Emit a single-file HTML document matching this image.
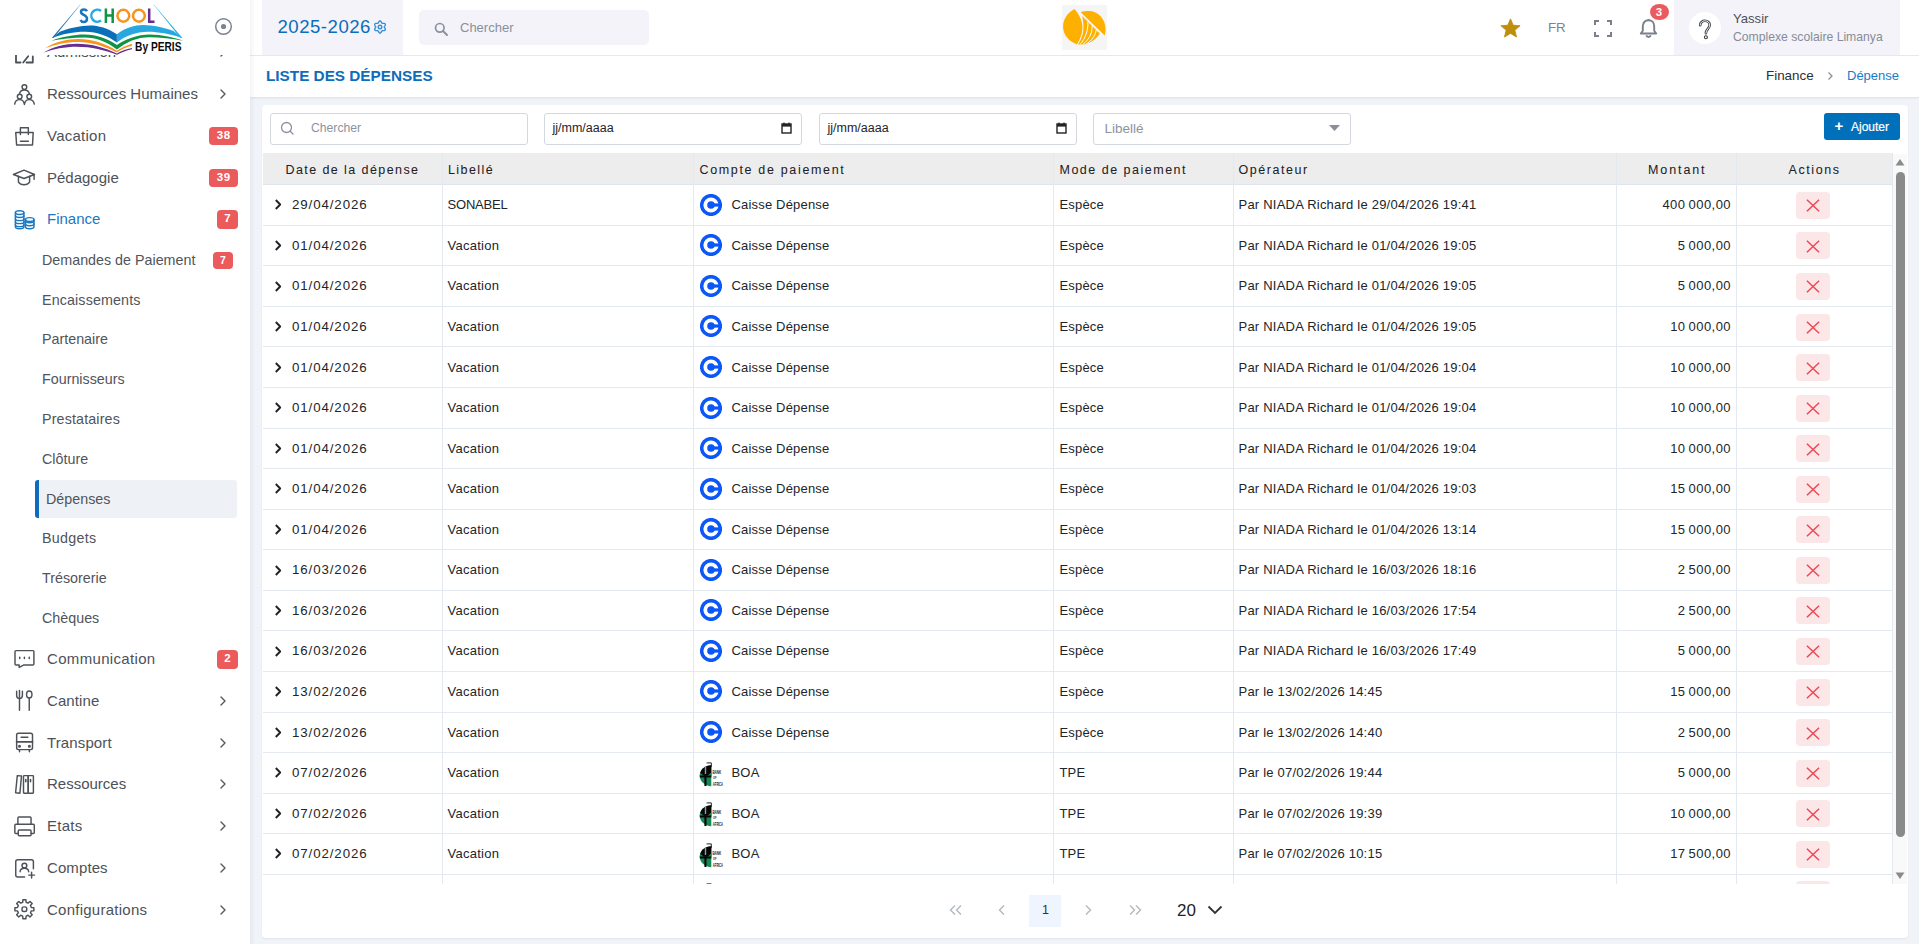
<!DOCTYPE html>
<html><head><meta charset="utf-8">
<style>
*{box-sizing:border-box;margin:0;padding:0}
html,body{width:1919px;height:944px;overflow:hidden}
body{font-family:"Liberation Sans",sans-serif;background:#f0f4f8;position:relative;color:#212529}
.abs{position:absolute}
#sidebar{position:absolute;left:0;top:0;width:250px;height:944px;background:#fff;z-index:5;overflow:hidden}
#sbshadow{position:absolute;left:250px;top:0;width:5px;height:944px;z-index:4;background:linear-gradient(to right,rgba(30,40,80,.05),rgba(30,40,80,0))}
.mi{position:absolute;left:0;width:250px;height:40px;color:#4d5158;font-size:15px;line-height:40px;white-space:nowrap}
.mi svg.ic{position:absolute;left:13px;top:9px}
.mi .tx{position:absolute;left:47px;top:0}
.sub{position:absolute;left:0;width:250px;height:38px;color:#50545b;font-size:14.3px;line-height:38px;white-space:nowrap}
.sub .tx{position:absolute;left:42px;top:0}
.badge{position:absolute;background:#eb5b5b;color:#fff;font-weight:bold;font-size:11.5px;text-align:center;border-radius:4px}
#topbar{position:absolute;left:250px;top:0;width:1669px;height:56px;background:#fff;border-bottom:1px solid #e6e8eb;z-index:2}
#titlebar{position:absolute;left:250px;top:56px;width:1669px;height:41px;background:#fff;box-shadow:0 1px 2px rgba(20,30,50,.09);z-index:1}
#card{position:absolute;left:262px;top:105px;width:1646px;height:833px;background:#fff;border-radius:4px;box-shadow:0 1px 2px rgba(20,30,50,.07)}
.inp{position:absolute;top:113px;height:31.5px;border:1px solid #d3d7de;border-radius:3px;background:#fff;font-size:12px;white-space:nowrap}
#tbl{position:absolute;left:263px;top:153px;width:1630px;height:731px;overflow:hidden}
.th{position:absolute;top:0;height:32px;background:#ededed;border-bottom:1px solid #dfe5ee;font-size:12.5px;letter-spacing:1.42px;line-height:31px;color:#1d2126;-webkit-text-stroke:0.05px #1d2126;white-space:nowrap}
.vl{position:absolute;top:0;width:1px;background:#e3e8f1}
.hl{position:absolute;left:0;width:1630px;height:1px;background:#e3e8f1}
.cell{position:absolute;font-size:13px;letter-spacing:0.18px;color:#212529;white-space:nowrap;line-height:16px}
.del{position:absolute;left:1533px;width:34px;height:27px;background:#fce7e8;border-radius:4px}
</style></head><body>

<div id="sidebar">
<div class="mi" style="top:32px;color:#4d5158">
<svg class="abs" style="left:0;top:0" width="50" height="40" viewBox="0 0 50 40"><g fill="none" stroke="#4d5158" stroke-width="1.45" stroke-linecap="round" stroke-linejoin="round"><g stroke-width="1.8"><path d="M16 21V30.5H20.5"/><path d="M23.2 30.5L28.2 24.2"/><path d="M26.5 30.5H32.8V24.5"/></g></g></svg>
<span class="tx" style="letter-spacing:0px">Admission</span>
<svg class="abs" style="left:219px;top:15px" width="8" height="10" viewBox="0 0 8 10"><path d="M2 1L6 5L2 9" fill="none" stroke="#55595f" stroke-width="1.4" stroke-linecap="round" stroke-linejoin="round"/></svg>
</div>
<div class="mi" style="top:74px;color:#4d5158">
<svg class="abs" style="left:0;top:0" width="50" height="40" viewBox="0 0 50 40"><g fill="none" stroke="#4d5158" stroke-width="1.45" stroke-linecap="round" stroke-linejoin="round"><circle cx="24.4" cy="13" r="2.35"/><path d="M19.5 19.7C20 17.2 22 15.9 24.4 15.9C26.8 15.9 28.8 17.2 29.4 19.7"/><circle cx="19.7" cy="22.6" r="2.35"/><circle cx="29.25" cy="22.6" r="2.35"/><path d="M14.7 30.1C15 27.5 17 25.6 19.7 25.6C22 25.6 24 27.5 24.4 30.5C24.8 27.5 26.8 25.6 29.25 25.6C31.9 25.6 33.9 27.5 34.3 30.1"/></g></svg>
<span class="tx" style="letter-spacing:0px">Ressources Humaines</span>
<svg class="abs" style="left:219px;top:15px" width="8" height="10" viewBox="0 0 8 10"><path d="M2 1L6 5L2 9" fill="none" stroke="#55595f" stroke-width="1.4" stroke-linecap="round" stroke-linejoin="round"/></svg>
</div>
<div class="mi" style="top:116px;color:#4d5158">
<svg class="abs" style="left:0;top:0" width="50" height="40" viewBox="0 0 50 40"><g fill="none" stroke="#4d5158" stroke-width="1.45" stroke-linecap="round" stroke-linejoin="round"><path d="M15.75 16.4H33.2L32.5 29H16.6Z"/><path d="M20.4 18.4V11.7H28.35V18.4"/><path d="M20.4 25.25H28.35"/></g></svg>
<span class="tx" style="letter-spacing:0.25px">Vacation</span>
</div>
<div class="badge" style="left:209px;top:126.7px;width:29px;height:18px;line-height:17px;letter-spacing:0.6px;text-indent:0.6px">38</div>
<div class="mi" style="top:158px;color:#4d5158">
<svg class="abs" style="left:0;top:0" width="50" height="40" viewBox="0 0 50 40"><g fill="none" stroke="#4d5158" stroke-width="1.45" stroke-linecap="round" stroke-linejoin="round"><path d="M13.4 16.5L24 12.2L34.5 16.5L24 20.5Z"/><path d="M18.45 18.3V24.1C19.5 25.8 21.5 26.8 24 26.8C26.5 26.8 28.5 25.8 29.6 24.1V18.3"/><path d="M34.1 16.5V21.2"/></g></svg>
<span class="tx" style="letter-spacing:0px">Pédagogie</span>
</div>
<div class="badge" style="left:209px;top:168.7px;width:29px;height:18px;line-height:17px;letter-spacing:0.6px;text-indent:0.6px">39</div>
<div class="mi" style="top:199px;color:#1b78c2">
<svg class="abs" style="left:0;top:0" width="50" height="40" viewBox="0 0 50 40"><g fill="none" stroke="#1b78c2" stroke-width="1.45" stroke-linecap="round" stroke-linejoin="round"><ellipse cx="19.65" cy="13.6" rx="4.25" ry="1.9"/><path d="M15.4 13.6V27.8C15.4 28.9 17.3 29.7 19.65 29.7C22 29.7 23.9 28.9 23.9 27.8V13.6"/><path d="M15.399999999999999 16.6C15.399999999999999 17.700000000000003 17.299999999999997 18.5 19.65 18.5C22.0 18.5 23.9 17.700000000000003 23.9 16.6"/><path d="M15.399999999999999 19.7C15.399999999999999 20.8 17.299999999999997 21.599999999999998 19.65 21.599999999999998C22.0 21.599999999999998 23.9 20.8 23.9 19.7"/><path d="M15.399999999999999 22.7C15.399999999999999 23.8 17.299999999999997 24.599999999999998 19.65 24.599999999999998C22.0 24.599999999999998 23.9 23.8 23.9 22.7"/><path d="M15.399999999999999 25.7C15.399999999999999 26.8 17.299999999999997 27.599999999999998 19.65 27.599999999999998C22.0 27.599999999999998 23.9 26.8 23.9 25.7"/><ellipse cx="29.7" cy="20.5" rx="4.25" ry="1.9"/><path d="M25.45 20.5V27.8C25.45 28.9 27.35 29.7 29.7 29.7C32.05 29.7 33.95 28.9 33.95 27.8V20.5"/><path d="M25.45 21.8C25.45 22.900000000000002 27.349999999999998 23.7 29.7 23.7C32.05 23.7 33.95 22.900000000000002 33.95 21.8"/><path d="M25.45 24.8C25.45 25.900000000000002 27.349999999999998 26.7 29.7 26.7C32.05 26.7 33.95 25.900000000000002 33.95 24.8"/></g></svg>
<span class="tx" style="letter-spacing:0px">Finance</span>
</div>
<div class="badge" style="left:217px;top:210px;width:21px;height:18.5px;line-height:17.5px">7</div>
<div class="mi" style="top:639px;color:#4d5158">
<svg class="abs" style="left:0;top:0" width="50" height="40" viewBox="0 0 50 40"><g fill="none" stroke="#4d5158" stroke-width="1.45" stroke-linecap="round" stroke-linejoin="round"><path d="M15 12.6Q15 11.6 16 11.6H32.9Q33.9 11.6 33.9 12.6V25.05Q33.9 26.05 32.9 26.05H23.5L19.2 28.4V26.05H16Q15 26.05 15 25.05Z"/><path d="M19.7 18.2V19.5M24.4 18.2V19.5M29.25 18.2V19.5" stroke-width="1.5"/></g></svg>
<span class="tx" style="letter-spacing:0.33px">Communication</span>
</div>
<div class="badge" style="left:217px;top:650px;width:21px;height:18.5px;line-height:17.5px">2</div>
<div class="mi" style="top:681px;color:#4d5158">
<svg class="abs" style="left:0;top:0" width="50" height="40" viewBox="0 0 50 40"><g fill="none" stroke="#4d5158" stroke-width="1.45" stroke-linecap="round" stroke-linejoin="round"><path d="M16.65 10.2V14.5C16.65 16.3 17.9 17.4 19.5 17.4C21.1 17.4 22.4 16.3 22.4 14.5V10.2"/><path d="M19.5 9.5V29.3"/><ellipse cx="29.25" cy="13.45" rx="2.7" ry="3.5"/><path d="M29.25 17V29.3"/></g></svg>
<span class="tx" style="letter-spacing:0.1px">Cantine</span>
<svg class="abs" style="left:219px;top:15px" width="8" height="10" viewBox="0 0 8 10"><path d="M2 1L6 5L2 9" fill="none" stroke="#55595f" stroke-width="1.4" stroke-linecap="round" stroke-linejoin="round"/></svg>
</div>
<div class="mi" style="top:723px;color:#4d5158">
<svg class="abs" style="left:0;top:0" width="50" height="40" viewBox="0 0 50 40"><g fill="none" stroke="#4d5158" stroke-width="1.45" stroke-linecap="round" stroke-linejoin="round"><rect x="16.65" y="10.2" width="15.85" height="16.4" rx="1.8"/><path d="M21.15 14.2H27.8" stroke-width="1.6"/><path d="M16.65 18.85H32.5" stroke-width="1.8"/><circle cx="19.5" cy="23.3" r=".8"/><circle cx="29.4" cy="23.3" r=".8"/><path d="M19.5 26.6V28.75M29.4 26.6V28.75"/></g></svg>
<span class="tx" style="letter-spacing:0.12px">Transport</span>
<svg class="abs" style="left:219px;top:15px" width="8" height="10" viewBox="0 0 8 10"><path d="M2 1L6 5L2 9" fill="none" stroke="#55595f" stroke-width="1.4" stroke-linecap="round" stroke-linejoin="round"/></svg>
</div>
<div class="mi" style="top:764px;color:#4d5158">
<svg class="abs" style="left:0;top:0" width="50" height="40" viewBox="0 0 50 40"><g fill="none" stroke="#4d5158" stroke-width="1.45" stroke-linecap="round" stroke-linejoin="round"><path d="M17.3 11.6L21.5 11.9L19.9 29.2L15.6 28.8Z"/><rect x="23.5" y="11.6" width="4.7" height="17.6" rx=".6"/><rect x="28.2" y="11.6" width="5.2" height="17.6" rx=".6"/><path d="M25.8 15.6V17.8M30.5 15.6V17.8" stroke-width="1.6"/></g></svg>
<span class="tx" style="letter-spacing:0px">Ressources</span>
<svg class="abs" style="left:219px;top:15px" width="8" height="10" viewBox="0 0 8 10"><path d="M2 1L6 5L2 9" fill="none" stroke="#55595f" stroke-width="1.4" stroke-linecap="round" stroke-linejoin="round"/></svg>
</div>
<div class="mi" style="top:806px;color:#4d5158">
<svg class="abs" style="left:0;top:0" width="50" height="40" viewBox="0 0 50 40"><g fill="none" stroke="#4d5158" stroke-width="1.45" stroke-linecap="round" stroke-linejoin="round"><path d="M17.9 18.3V11.9Q17.9 10.9 18.9 10.9H30.05Q31.05 10.9 31.05 11.9V18.3"/><path d="M18.25 27.5H15.85Q14.85 27.5 14.85 26.5V19.3Q14.85 18.3 15.85 18.3H33.3Q34.3 18.3 34.3 19.3V26.5Q34.3 27.5 33.3 27.5H31.05"/><rect x="18.25" y="23.9" width="12.8" height="5.9" rx="1"/></g></svg>
<span class="tx" style="letter-spacing:0.25px">Etats</span>
<svg class="abs" style="left:219px;top:15px" width="8" height="10" viewBox="0 0 8 10"><path d="M2 1L6 5L2 9" fill="none" stroke="#55595f" stroke-width="1.4" stroke-linecap="round" stroke-linejoin="round"/></svg>
</div>
<div class="mi" style="top:848px;color:#4d5158">
<svg class="abs" style="left:0;top:0" width="50" height="40" viewBox="0 0 50 40"><g fill="none" stroke="#4d5158" stroke-width="1.45" stroke-linecap="round" stroke-linejoin="round"><path d="M33.4 20.65V13.65Q33.4 11.65 31.4 11.65H17.75Q15.75 11.65 15.75 13.65V26.9Q15.75 28.9 17.75 28.9H24.6"/><circle cx="24.4" cy="17.6" r="2.4"/><path d="M20.05 23.7C20.3 21.5 22 20.3 24.4 20.3C26.8 20.3 28.5 21.5 28.7 23.7"/><path d="M31.6 24.2V30M28.7 27.1H34.5"/></g></svg>
<span class="tx" style="letter-spacing:0.1px">Comptes</span>
<svg class="abs" style="left:219px;top:15px" width="8" height="10" viewBox="0 0 8 10"><path d="M2 1L6 5L2 9" fill="none" stroke="#55595f" stroke-width="1.4" stroke-linecap="round" stroke-linejoin="round"/></svg>
</div>
<div class="mi" style="top:890px;color:#4d5158">
<svg class="abs" style="left:0;top:0" width="50" height="40" viewBox="0 0 50 40"><g fill="none" stroke="#4d5158" stroke-width="1.45" stroke-linecap="round" stroke-linejoin="round"><path d="M22.71 12.30 L22.87 9.72 L25.93 9.72 L26.09 12.30 L28.08 13.13 L30.02 11.42 L32.18 13.58 L30.47 15.52 L31.30 17.51 L33.88 17.67 L33.88 20.73 L31.30 20.89 L30.47 22.88 L32.18 24.82 L30.02 26.98 L28.08 25.27 L26.09 26.10 L25.93 28.68 L22.87 28.68 L22.71 26.10 L20.72 25.27 L18.78 26.98 L16.62 24.82 L18.33 22.88 L17.50 20.89 L14.92 20.73 L14.92 17.67 L17.50 17.51 L18.33 15.52 L16.62 13.58 L18.78 11.42 L20.72 13.13Z"/><rect x="22.05" y="16.85" width="4.7" height="4.7" rx="1.8"/></g></svg>
<span class="tx" style="letter-spacing:0.25px">Configurations</span>
<svg class="abs" style="left:219px;top:15px" width="8" height="10" viewBox="0 0 8 10"><path d="M2 1L6 5L2 9" fill="none" stroke="#55595f" stroke-width="1.4" stroke-linecap="round" stroke-linejoin="round"/></svg>
</div>
<div class="sub" style="top:241px"><span class="tx" style="letter-spacing:0px">Demandes de Paiement</span></div>
<div class="badge" style="left:213px;top:251.5px;width:20px;height:17px;line-height:17px;font-size:10.5px">7</div>
<div class="sub" style="top:281px"><span class="tx" style="letter-spacing:0.12px">Encaissements</span></div>
<div class="sub" style="top:320px"><span class="tx" style="letter-spacing:0px">Partenaire</span></div>
<div class="sub" style="top:360px"><span class="tx" style="letter-spacing:0px">Fournisseurs</span></div>
<div class="sub" style="top:400px"><span class="tx" style="letter-spacing:0.14px">Prestataires</span></div>
<div class="sub" style="top:440px"><span class="tx" style="letter-spacing:0px">Clôture</span></div>
<div class="abs" style="left:35px;top:480px;width:202px;height:38px;background:#eef1f6;border-radius:3px;border-left:4px solid #0f6cbd"></div>
<div class="sub" style="top:480px"><span class="tx" style="left:46px">Dépenses</span></div>
<div class="sub" style="top:519px"><span class="tx" style="letter-spacing:0.28px">Budgets</span></div>
<div class="sub" style="top:559px"><span class="tx" style="letter-spacing:0px">Trésorerie</span></div>
<div class="sub" style="top:599px"><span class="tx" style="letter-spacing:0px">Chèques</span></div>
<div class="abs" style="left:0;top:0;width:250px;height:55px;background:#fff"></div>
<svg class="abs" style="left:0;top:0" width="250" height="60" viewBox="0 0 250 60">
<path d="M80.3 4.4L51.75 38.1L54 37.6L80.6 4.6Z" fill="#1b75bb"/>
<path d="M153.8 4.4L182.4 38.1L180 37.5L153.5 4.6Z" fill="#29abe2"/>
<path d="M51.75 38.1C62 34 75 31.6 85.7 31.8C97 32 108 36 116.9 42.6L116.9 34.3C108 28 98 25.4 90.2 25.4C80 25.4 68 28.5 60.3 31.4Z" fill="#0a6fb9"/>
<path d="M182.4 38.1C170 34 158 31.8 148.1 31.8C136 31.8 125 36 116.9 42.6L116.9 34.3C125 28 135 25.1 143 25.1C153 25.1 165 28 173.5 31.1Z" fill="#29a8e0"/>
<path d="M51.4 40.7C62 37 74 34.6 84.5 34.6C97 34.6 108 39 116.9 45.1C126 39 138 34.6 149.4 34.6C162 34.6 175 38 183 40.7C172 38.5 160 37.2 149.4 37.2C137 37.2 126 42 116.9 49.6C108 42 96 37.5 84.5 37.5C73 37.5 61 39 51.4 40.7Z" fill="#0d9444"/>
<path d="M45.1 48.3C55 42 67 39.1 78.1 39.1C92 39.1 105 43.5 116.9 50.8C121 48 126 45.5 131.9 43.8L131.9 45.7C126 47 121 49.5 116.9 52.5C105 46 91 41.9 78.1 41.9C66 41.9 55 44.5 45.1 48.3Z" fill="#f7941d"/>
<path d="M43.2 52.7C53 47 65 43.8 76.8 43.8C92 43.8 105 48 116.9 53.4C121 51 126 49 131.9 48L131.9 49.2C126 50.5 121 52.5 116.9 54.8C105 50 91 46.7 76.8 46.7C65 46.7 53 49 43.2 52.7Z" fill="#662d91"/>
<g fill="none" stroke-width="2.5">
<path d="M87 11.2C86.2 9.9 85.1 9.5 83.9 9.5C82.1 9.5 81 10.7 81 12C81 15.3 87 14.6 87 18.6C87 20.8 85.5 22.1 83.7 22.1C82.2 22.1 81.1 21.3 80.5 20" stroke="#1b75bb"/>
<path d="M101 10.9A6.05 6.05 0 1 0 101 20.6" stroke="#29abe2"/>
<path d="M105.9 8.6V22.9M112.7 8.6V22.9M105.9 15.6H112.7" stroke="#0d9444"/>
<circle cx="123.35" cy="15.75" r="5.9" stroke="#f7941d"/>
<circle cx="138.9" cy="15.75" r="5.9" stroke="#f7941d"/>
<path d="M149.2 8.6V21.8H154.5" stroke="#662d91"/>
</g>
<text x="135.1" y="51.1" font-family="Liberation Sans" font-size="12.6" font-weight="bold" fill="#0a0a0a" textLength="46.4" lengthAdjust="spacingAndGlyphs">By PERIS</text>
</svg>
<svg class="abs" style="left:214px;top:17px" width="19" height="19" viewBox="0 0 19 19"><circle cx="9.5" cy="9.5" r="7.8" fill="none" stroke="#7d8391" stroke-width="1.5"/><circle cx="9.5" cy="9.5" r="2.6" fill="#7d8391"/></svg>
</div>
<div id="sbshadow"></div>
<div id="topbar">
<div class="abs" style="left:12px;top:0;width:141px;height:55px;background:#f3f3f9"></div>
<div class="abs" style="left:27.5px;top:16px;font-size:18.6px;letter-spacing:0.5px;line-height:22px;color:#0c6dba;white-space:nowrap">2025-2026</div>
<svg class="abs" style="left:123px;top:20px" width="14" height="14" viewBox="0 0 14 14"><g fill="none" stroke="#3a8fd4" stroke-width="1.4"><path d="M11.30 7.00 L11.34 7.23 L11.44 7.47 L11.59 7.73 L11.78 8.02 L11.97 8.33 L12.15 8.67 L12.27 9.02 L12.33 9.37 L12.31 9.71 L12.20 10.00 L12.00 10.25 L11.72 10.43 L11.39 10.56 L11.02 10.62 L10.64 10.64 L10.27 10.63 L9.93 10.61 L9.62 10.61 L9.36 10.64 L9.15 10.72 L8.97 10.87 L8.81 11.08 L8.67 11.34 L8.51 11.65 L8.33 11.97 L8.13 12.29 L7.88 12.58 L7.61 12.81 L7.31 12.95 L7.00 13.00 L6.69 12.95 L6.39 12.81 L6.12 12.58 L5.87 12.29 L5.67 11.97 L5.49 11.65 L5.33 11.34 L5.19 11.08 L5.03 10.87 L4.85 10.72 L4.64 10.64 L4.38 10.61 L4.07 10.61 L3.73 10.63 L3.36 10.64 L2.98 10.62 L2.61 10.56 L2.28 10.43 L2.00 10.25 L1.80 10.00 L1.69 9.71 L1.67 9.37 L1.73 9.02 L1.85 8.67 L2.03 8.33 L2.22 8.02 L2.41 7.73 L2.56 7.47 L2.66 7.23 L2.70 7.00 L2.66 6.77 L2.56 6.53 L2.41 6.27 L2.22 5.98 L2.03 5.67 L1.85 5.33 L1.73 4.98 L1.67 4.63 L1.69 4.29 L1.80 4.00 L2.00 3.75 L2.28 3.57 L2.61 3.44 L2.98 3.38 L3.36 3.36 L3.73 3.37 L4.07 3.39 L4.38 3.39 L4.64 3.36 L4.85 3.28 L5.03 3.13 L5.19 2.92 L5.33 2.66 L5.49 2.35 L5.67 2.03 L5.87 1.71 L6.12 1.42 L6.39 1.19 L6.69 1.05 L7.00 1.00 L7.31 1.05 L7.61 1.19 L7.88 1.42 L8.13 1.71 L8.33 2.03 L8.51 2.35 L8.67 2.66 L8.81 2.92 L8.97 3.13 L9.15 3.28 L9.36 3.36 L9.62 3.39 L9.93 3.39 L10.27 3.37 L10.64 3.36 L11.02 3.38 L11.39 3.44 L11.72 3.57 L12.00 3.75 L12.20 4.00 L12.31 4.29 L12.33 4.63 L12.27 4.98 L12.15 5.33 L11.97 5.67 L11.78 5.98 L11.59 6.27 L11.44 6.53 L11.34 6.77Z"/><circle cx="7" cy="7" r="1.8"/></g></svg>
<div class="abs" style="left:169px;top:10px;width:230px;height:35px;background:#f3f3f9;border-radius:5px"></div>
<svg class="abs" style="left:184px;top:22px" width="14" height="14" viewBox="0 0 14 14"><circle cx="5.8" cy="5.8" r="4.3" fill="none" stroke="#8b909c" stroke-width="1.7"/><path d="M9 9L13 13" stroke="#8b909c" stroke-width="1.9" stroke-linecap="round"/></svg>
<div class="abs" style="left:210px;top:20px;font-size:13px;line-height:15px;color:#8a8f9b">Chercher</div>
<div class="abs" style="left:812px;top:5px;width:45px;height:45px;background:#f5f5f5">
<svg width="45" height="45" viewBox="0 0 45 45">
<path d="M12.4 4.1C5 8.5 1.1 14.5 1.1 21.8C1.1 30 7 36.5 14.9 39.4C19 33 20.6 27 20.4 21.8C20.2 16 17.5 9.5 12.4 4.1Z" fill="#fdb000"/>
<path d="M18.7 7.2C21 6.4 24 6.1 26.7 6.1C36 6.1 43.5 14 43.5 24.5C43.5 26.5 43.2 28.6 42.7 30.6Z" fill="#fdb000"/>
<path d="M20.1 11L37.7 28.6C35 33.5 30 37.5 23 39.2C20.5 39.6 18 39.6 16 39.4C19.8 34 21.6 27.5 21.5 21.8C21.4 17.5 20.9 14 20.1 11Z" fill="#fdb000"/>
<g fill="none" stroke="#fff" stroke-width="1"><path d="M25.9 16.8C26.3 25 23.5 33.5 18 39.6"/><path d="M30.1 21C30.3 28.5 27 34.5 20.8 39.6"/><path d="M34.2 25.1C33.3 30.5 30 35.5 23.8 39.4"/></g>
</svg></div>
<svg class="abs" style="left:1250px;top:18px" width="21" height="20" viewBox="0 0 24 23"><path d="M12 1L15.1 8.3L23 8.9L17 14.1L18.9 21.9L12 17.7L5.1 21.9L7 14.1L1 8.9L8.9 8.3Z" fill="#bd8f0c" stroke="#bd8f0c" stroke-width="1" stroke-linejoin="round"/></svg>
<div class="abs" style="left:1298px;top:20px;font-size:13.3px;line-height:15px;color:#7d8290">FR</div>
<svg class="abs" style="left:1344px;top:20px" width="18" height="17" viewBox="0 0 18 17"><g fill="none" stroke="#7a7f8c" stroke-width="2"><path d="M1 5V1H5"/><path d="M13 1H17V5"/><path d="M17 12V16H13"/><path d="M5 16H1V12"/></g></svg>
<svg class="abs" style="left:1389px;top:18px" width="19" height="20" viewBox="0 0 19 20"><g fill="none" stroke="#7a7f8c" stroke-width="1.9" stroke-linejoin="round"><path d="M9.5 2.2C6 2.2 3.8 5 3.8 8.2V12.8L1.8 15.5H17.2L15.2 12.8V8.2C15.2 5 13 2.2 9.5 2.2Z"/><path d="M7.3 17.3C7.6 18.5 8.4 19 9.5 19C10.6 19 11.4 18.5 11.7 17.3"/><path d="M9.5 1V2.2"/></g></svg>
<div class="abs" style="left:1399.5px;top:3.5px;width:19px;height:16.5px;border-radius:50%;background:#ea5a5e;color:#fff;font-weight:bold;font-size:11.5px;line-height:16.5px;text-align:center">3</div>
<div class="abs" style="left:1424px;top:0;width:226px;height:55px;background:#f3f3f9"></div>
<div class="abs" style="left:1439px;top:12px;width:32px;height:32px;border-radius:16px;background:#fff"></div>
<svg class="abs" style="left:1447px;top:18.5px" width="16" height="22" viewBox="0 0 16 22"><g fill="none" stroke="#3a3e44" stroke-linecap="round" stroke-linejoin="round"><path d="M3.2 6.2C3.2 3.4 5.3 1.8 7.9 1.8C10.6 1.8 12.7 3.6 12.7 6.1C12.7 9.6 8.9 10.2 8.9 14.2" stroke-width="2.6"/><path d="M3.2 6.2C3.2 3.4 5.3 1.8 7.9 1.8C10.6 1.8 12.7 3.6 12.7 6.1C12.7 9.6 8.9 10.2 8.9 14.2" stroke="#fff" stroke-width="0.9"/><circle cx="8.9" cy="18.2" r="1.5" stroke-width="1.1"/></g></svg>
<div class="abs" style="left:1483px;top:11px;font-size:13.1px;line-height:15px;color:#4d5158">Yassir</div>
<div class="abs" style="left:1483px;top:30px;font-size:12.2px;line-height:15px;color:#878b96">Complexe scolaire Limanya</div>
</div>
<div id="titlebar">
<div class="abs" style="left:16px;top:11px;font-size:15.3px;line-height:18px;font-weight:bold;color:#0c6dba;white-space:nowrap">LISTE DES DÉPENSES</div>
<div class="abs" style="left:1516px;top:12px;font-size:13.4px;line-height:15px;color:#2b2f36">Finance</div>
<svg class="abs" style="left:1577px;top:15px" width="7" height="10" viewBox="0 0 7 10"><path d="M1.5 1.5L5 5L1.5 8.5" fill="none" stroke="#8a8e99" stroke-width="1.3"/></svg>
<div class="abs" style="left:1597px;top:12px;font-size:13px;line-height:15px;color:#1a7bc4">Dépense</div>
</div>
<div id="card"></div>
<div class="inp" style="left:270px;width:257.5px"></div>
<svg class="abs" style="left:280px;top:121px" width="15" height="15" viewBox="0 0 15 15"><circle cx="6.5" cy="6.5" r="5" fill="none" stroke="#8c93a0" stroke-width="1.3"/><path d="M10.2 10.2L13 13" stroke="#8c93a0" stroke-width="1.3" stroke-linecap="round"/></svg>
<div class="abs" style="left:311px;top:121px;font-size:12.2px;line-height:14px;color:#8c93a0">Chercher</div>
<div class="inp" style="left:544px;width:258px"></div>
<div class="abs" style="left:552.5px;top:121px;font-size:12.5px;line-height:14px;color:#1f2328">jj/mm/aaaa</div>
<svg class="abs" style="left:781px;top:122px" width="11" height="12" viewBox="0 0 11 12"><g fill="none" stroke="#222" stroke-width="1.4"><rect x="1" y="2" width="9" height="9"/></g><rect x="1" y="2" width="9" height="2.6" fill="#222"/><path d="M3 0.5V2M8 0.5V2" stroke="#222" stroke-width="1.2"/></svg>
<div class="inp" style="left:819px;width:258px"></div>
<div class="abs" style="left:827.5px;top:121px;font-size:12.5px;line-height:14px;color:#1f2328">jj/mm/aaaa</div>
<svg class="abs" style="left:1056px;top:122px" width="11" height="12" viewBox="0 0 11 12"><g fill="none" stroke="#222" stroke-width="1.4"><rect x="1" y="2" width="9" height="9"/></g><rect x="1" y="2" width="9" height="2.6" fill="#222"/><path d="M3 0.5V2M8 0.5V2" stroke="#222" stroke-width="1.2"/></svg>
<div class="inp" style="left:1093px;width:258px"></div>
<div class="abs" style="left:1104.5px;top:122px;font-size:13.5px;line-height:14px;color:#8c93a0">Libellé</div>
<svg class="abs" style="left:1329px;top:125px" width="11" height="6" viewBox="0 0 11 6"><path d="M0 0H11L5.5 6Z" fill="#8a8f99"/></svg>
<div class="abs" style="left:1824px;top:113px;width:76px;height:27px;background:#0070bb;border-radius:3px"></div>
<div class="abs" style="left:1834.5px;top:118px;font-size:15px;line-height:16px;color:#fff;font-weight:bold">+</div>
<div class="abs" style="left:1851px;top:120px;font-size:12px;line-height:14px;color:#fff;-webkit-text-stroke:0.2px #fff">Ajouter</div>
<div id="tbl">
<div class="th" style="left:0;width:1630px"></div>
<div class="th" style="left:22.5px;top:1.5px;background:none;border:none;letter-spacing:1.42px">Date de la dépense</div>
<div class="th" style="left:185px;top:1.5px;background:none;border:none;letter-spacing:1.42px">Libellé</div>
<div class="th" style="left:436.5px;top:1.5px;background:none;border:none;letter-spacing:1.66px">Compte de paiement</div>
<div class="th" style="left:796.5px;top:1.5px;background:none;border:none;letter-spacing:1.5px">Mode de paiement</div>
<div class="th" style="left:975.5px;top:1.5px;background:none;border:none;letter-spacing:1.55px">Opérateur</div>
<div class="th" style="left:1385px;top:1.5px;background:none;border:none;letter-spacing:1.9px">Montant</div>
<div class="th" style="left:1525.5px;top:1.5px;background:none;border:none;letter-spacing:1.6px">Actions</div>
<div class="hl" style="top:71.80px"></div>
<div class="hl" style="top:112.36px"></div>
<div class="hl" style="top:152.92px"></div>
<div class="hl" style="top:193.48px"></div>
<div class="hl" style="top:234.04px"></div>
<div class="hl" style="top:274.60px"></div>
<div class="hl" style="top:315.16px"></div>
<div class="hl" style="top:355.72px"></div>
<div class="hl" style="top:396.28px"></div>
<div class="hl" style="top:436.84px"></div>
<div class="hl" style="top:477.40px"></div>
<div class="hl" style="top:517.96px"></div>
<div class="hl" style="top:558.52px"></div>
<div class="hl" style="top:599.08px"></div>
<div class="hl" style="top:639.64px"></div>
<div class="hl" style="top:680.20px"></div>
<div class="hl" style="top:720.76px"></div>
<div class="hl" style="top:761.32px"></div>
<div class="vl" style="left:179px;height:731px"></div>
<div class="vl" style="left:430px;height:731px"></div>
<div class="vl" style="left:790px;height:731px"></div>
<div class="vl" style="left:970px;height:731px"></div>
<div class="vl" style="left:1353px;height:731px"></div>
<div class="vl" style="left:1473px;height:731px"></div>
<div class="vl" style="left:1629px;height:731px"></div>
<svg class="abs" style="left:11px;top:46.40px" width="8" height="11" viewBox="0 0 8 11"><path d="M1.8 1L6.2 5.5L1.8 10" fill="none" stroke="#1f2328" stroke-width="1.9" stroke-linejoin="round"/></svg>
<div class="cell" style="left:29px;top:44.20px;font-size:13.3px;letter-spacing:0.9px">29/04/2026</div>
<div class="cell" style="left:184.5px;top:44.20px;letter-spacing:-0.2px">SONABEL</div>
<svg class="abs" style="left:436.7px;top:40.60px" width="22" height="22" viewBox="0 0 22 22"><circle cx="11" cy="11" r="11.1" fill="#0b57f7"/><circle cx="11" cy="11" r="5.7" fill="none" stroke="#fff" stroke-width="3.8"/><rect x="11" y="9.4" width="9" height="3.2" fill="#0b57f7"/></svg>
<div class="cell" style="left:468.5px;top:44.20px">Caisse Dépense</div>
<div class="cell" style="left:796.5px;top:44.20px">Espèce</div>
<div class="cell" style="left:975.5px;top:44.20px;letter-spacing:0.22px">Par NIADA Richard le 29/04/2026 19:41</div>
<div class="cell" style="left:1293px;width:175px;text-align:right;top:44.20px;letter-spacing:0.45px">400&#8201;000,00</div>
<div class="del" style="top:38.70px"><svg class="abs" style="left:10px;top:7.5px" width="14" height="13" viewBox="0 0 14 13"><path d="M0.9 0.8L13.1 12.2M13.1 0.8L0.9 12.2" stroke="#ee4a55" stroke-width="1.55"/></svg></div>
<svg class="abs" style="left:11px;top:87.08px" width="8" height="11" viewBox="0 0 8 11"><path d="M1.8 1L6.2 5.5L1.8 10" fill="none" stroke="#1f2328" stroke-width="1.9" stroke-linejoin="round"/></svg>
<div class="cell" style="left:29px;top:84.88px;font-size:13.3px;letter-spacing:0.9px">01/04/2026</div>
<div class="cell" style="left:184.5px;top:84.88px;letter-spacing:0.25px">Vacation</div>
<svg class="abs" style="left:436.7px;top:81.28px" width="22" height="22" viewBox="0 0 22 22"><circle cx="11" cy="11" r="11.1" fill="#0b57f7"/><circle cx="11" cy="11" r="5.7" fill="none" stroke="#fff" stroke-width="3.8"/><rect x="11" y="9.4" width="9" height="3.2" fill="#0b57f7"/></svg>
<div class="cell" style="left:468.5px;top:84.88px">Caisse Dépense</div>
<div class="cell" style="left:796.5px;top:84.88px">Espèce</div>
<div class="cell" style="left:975.5px;top:84.88px;letter-spacing:0.22px">Par NIADA Richard le 01/04/2026 19:05</div>
<div class="cell" style="left:1293px;width:175px;text-align:right;top:84.88px;letter-spacing:0.45px">5&#8201;000,00</div>
<div class="del" style="top:79.38px"><svg class="abs" style="left:10px;top:7.5px" width="14" height="13" viewBox="0 0 14 13"><path d="M0.9 0.8L13.1 12.2M13.1 0.8L0.9 12.2" stroke="#ee4a55" stroke-width="1.55"/></svg></div>
<svg class="abs" style="left:11px;top:127.64px" width="8" height="11" viewBox="0 0 8 11"><path d="M1.8 1L6.2 5.5L1.8 10" fill="none" stroke="#1f2328" stroke-width="1.9" stroke-linejoin="round"/></svg>
<div class="cell" style="left:29px;top:125.44px;font-size:13.3px;letter-spacing:0.9px">01/04/2026</div>
<div class="cell" style="left:184.5px;top:125.44px;letter-spacing:0.25px">Vacation</div>
<svg class="abs" style="left:436.7px;top:121.84px" width="22" height="22" viewBox="0 0 22 22"><circle cx="11" cy="11" r="11.1" fill="#0b57f7"/><circle cx="11" cy="11" r="5.7" fill="none" stroke="#fff" stroke-width="3.8"/><rect x="11" y="9.4" width="9" height="3.2" fill="#0b57f7"/></svg>
<div class="cell" style="left:468.5px;top:125.44px">Caisse Dépense</div>
<div class="cell" style="left:796.5px;top:125.44px">Espèce</div>
<div class="cell" style="left:975.5px;top:125.44px;letter-spacing:0.22px">Par NIADA Richard le 01/04/2026 19:05</div>
<div class="cell" style="left:1293px;width:175px;text-align:right;top:125.44px;letter-spacing:0.45px">5&#8201;000,00</div>
<div class="del" style="top:119.94px"><svg class="abs" style="left:10px;top:7.5px" width="14" height="13" viewBox="0 0 14 13"><path d="M0.9 0.8L13.1 12.2M13.1 0.8L0.9 12.2" stroke="#ee4a55" stroke-width="1.55"/></svg></div>
<svg class="abs" style="left:11px;top:168.20px" width="8" height="11" viewBox="0 0 8 11"><path d="M1.8 1L6.2 5.5L1.8 10" fill="none" stroke="#1f2328" stroke-width="1.9" stroke-linejoin="round"/></svg>
<div class="cell" style="left:29px;top:166.00px;font-size:13.3px;letter-spacing:0.9px">01/04/2026</div>
<div class="cell" style="left:184.5px;top:166.00px;letter-spacing:0.25px">Vacation</div>
<svg class="abs" style="left:436.7px;top:162.40px" width="22" height="22" viewBox="0 0 22 22"><circle cx="11" cy="11" r="11.1" fill="#0b57f7"/><circle cx="11" cy="11" r="5.7" fill="none" stroke="#fff" stroke-width="3.8"/><rect x="11" y="9.4" width="9" height="3.2" fill="#0b57f7"/></svg>
<div class="cell" style="left:468.5px;top:166.00px">Caisse Dépense</div>
<div class="cell" style="left:796.5px;top:166.00px">Espèce</div>
<div class="cell" style="left:975.5px;top:166.00px;letter-spacing:0.22px">Par NIADA Richard le 01/04/2026 19:05</div>
<div class="cell" style="left:1293px;width:175px;text-align:right;top:166.00px;letter-spacing:0.45px">10&#8201;000,00</div>
<div class="del" style="top:160.50px"><svg class="abs" style="left:10px;top:7.5px" width="14" height="13" viewBox="0 0 14 13"><path d="M0.9 0.8L13.1 12.2M13.1 0.8L0.9 12.2" stroke="#ee4a55" stroke-width="1.55"/></svg></div>
<svg class="abs" style="left:11px;top:208.76px" width="8" height="11" viewBox="0 0 8 11"><path d="M1.8 1L6.2 5.5L1.8 10" fill="none" stroke="#1f2328" stroke-width="1.9" stroke-linejoin="round"/></svg>
<div class="cell" style="left:29px;top:206.56px;font-size:13.3px;letter-spacing:0.9px">01/04/2026</div>
<div class="cell" style="left:184.5px;top:206.56px;letter-spacing:0.25px">Vacation</div>
<svg class="abs" style="left:436.7px;top:202.96px" width="22" height="22" viewBox="0 0 22 22"><circle cx="11" cy="11" r="11.1" fill="#0b57f7"/><circle cx="11" cy="11" r="5.7" fill="none" stroke="#fff" stroke-width="3.8"/><rect x="11" y="9.4" width="9" height="3.2" fill="#0b57f7"/></svg>
<div class="cell" style="left:468.5px;top:206.56px">Caisse Dépense</div>
<div class="cell" style="left:796.5px;top:206.56px">Espèce</div>
<div class="cell" style="left:975.5px;top:206.56px;letter-spacing:0.22px">Par NIADA Richard le 01/04/2026 19:04</div>
<div class="cell" style="left:1293px;width:175px;text-align:right;top:206.56px;letter-spacing:0.45px">10&#8201;000,00</div>
<div class="del" style="top:201.06px"><svg class="abs" style="left:10px;top:7.5px" width="14" height="13" viewBox="0 0 14 13"><path d="M0.9 0.8L13.1 12.2M13.1 0.8L0.9 12.2" stroke="#ee4a55" stroke-width="1.55"/></svg></div>
<svg class="abs" style="left:11px;top:249.32px" width="8" height="11" viewBox="0 0 8 11"><path d="M1.8 1L6.2 5.5L1.8 10" fill="none" stroke="#1f2328" stroke-width="1.9" stroke-linejoin="round"/></svg>
<div class="cell" style="left:29px;top:247.12px;font-size:13.3px;letter-spacing:0.9px">01/04/2026</div>
<div class="cell" style="left:184.5px;top:247.12px;letter-spacing:0.25px">Vacation</div>
<svg class="abs" style="left:436.7px;top:243.52px" width="22" height="22" viewBox="0 0 22 22"><circle cx="11" cy="11" r="11.1" fill="#0b57f7"/><circle cx="11" cy="11" r="5.7" fill="none" stroke="#fff" stroke-width="3.8"/><rect x="11" y="9.4" width="9" height="3.2" fill="#0b57f7"/></svg>
<div class="cell" style="left:468.5px;top:247.12px">Caisse Dépense</div>
<div class="cell" style="left:796.5px;top:247.12px">Espèce</div>
<div class="cell" style="left:975.5px;top:247.12px;letter-spacing:0.22px">Par NIADA Richard le 01/04/2026 19:04</div>
<div class="cell" style="left:1293px;width:175px;text-align:right;top:247.12px;letter-spacing:0.45px">10&#8201;000,00</div>
<div class="del" style="top:241.62px"><svg class="abs" style="left:10px;top:7.5px" width="14" height="13" viewBox="0 0 14 13"><path d="M0.9 0.8L13.1 12.2M13.1 0.8L0.9 12.2" stroke="#ee4a55" stroke-width="1.55"/></svg></div>
<svg class="abs" style="left:11px;top:289.88px" width="8" height="11" viewBox="0 0 8 11"><path d="M1.8 1L6.2 5.5L1.8 10" fill="none" stroke="#1f2328" stroke-width="1.9" stroke-linejoin="round"/></svg>
<div class="cell" style="left:29px;top:287.68px;font-size:13.3px;letter-spacing:0.9px">01/04/2026</div>
<div class="cell" style="left:184.5px;top:287.68px;letter-spacing:0.25px">Vacation</div>
<svg class="abs" style="left:436.7px;top:284.08px" width="22" height="22" viewBox="0 0 22 22"><circle cx="11" cy="11" r="11.1" fill="#0b57f7"/><circle cx="11" cy="11" r="5.7" fill="none" stroke="#fff" stroke-width="3.8"/><rect x="11" y="9.4" width="9" height="3.2" fill="#0b57f7"/></svg>
<div class="cell" style="left:468.5px;top:287.68px">Caisse Dépense</div>
<div class="cell" style="left:796.5px;top:287.68px">Espèce</div>
<div class="cell" style="left:975.5px;top:287.68px;letter-spacing:0.22px">Par NIADA Richard le 01/04/2026 19:04</div>
<div class="cell" style="left:1293px;width:175px;text-align:right;top:287.68px;letter-spacing:0.45px">10&#8201;000,00</div>
<div class="del" style="top:282.18px"><svg class="abs" style="left:10px;top:7.5px" width="14" height="13" viewBox="0 0 14 13"><path d="M0.9 0.8L13.1 12.2M13.1 0.8L0.9 12.2" stroke="#ee4a55" stroke-width="1.55"/></svg></div>
<svg class="abs" style="left:11px;top:330.44px" width="8" height="11" viewBox="0 0 8 11"><path d="M1.8 1L6.2 5.5L1.8 10" fill="none" stroke="#1f2328" stroke-width="1.9" stroke-linejoin="round"/></svg>
<div class="cell" style="left:29px;top:328.24px;font-size:13.3px;letter-spacing:0.9px">01/04/2026</div>
<div class="cell" style="left:184.5px;top:328.24px;letter-spacing:0.25px">Vacation</div>
<svg class="abs" style="left:436.7px;top:324.64px" width="22" height="22" viewBox="0 0 22 22"><circle cx="11" cy="11" r="11.1" fill="#0b57f7"/><circle cx="11" cy="11" r="5.7" fill="none" stroke="#fff" stroke-width="3.8"/><rect x="11" y="9.4" width="9" height="3.2" fill="#0b57f7"/></svg>
<div class="cell" style="left:468.5px;top:328.24px">Caisse Dépense</div>
<div class="cell" style="left:796.5px;top:328.24px">Espèce</div>
<div class="cell" style="left:975.5px;top:328.24px;letter-spacing:0.22px">Par NIADA Richard le 01/04/2026 19:03</div>
<div class="cell" style="left:1293px;width:175px;text-align:right;top:328.24px;letter-spacing:0.45px">15&#8201;000,00</div>
<div class="del" style="top:322.74px"><svg class="abs" style="left:10px;top:7.5px" width="14" height="13" viewBox="0 0 14 13"><path d="M0.9 0.8L13.1 12.2M13.1 0.8L0.9 12.2" stroke="#ee4a55" stroke-width="1.55"/></svg></div>
<svg class="abs" style="left:11px;top:371.00px" width="8" height="11" viewBox="0 0 8 11"><path d="M1.8 1L6.2 5.5L1.8 10" fill="none" stroke="#1f2328" stroke-width="1.9" stroke-linejoin="round"/></svg>
<div class="cell" style="left:29px;top:368.80px;font-size:13.3px;letter-spacing:0.9px">01/04/2026</div>
<div class="cell" style="left:184.5px;top:368.80px;letter-spacing:0.25px">Vacation</div>
<svg class="abs" style="left:436.7px;top:365.20px" width="22" height="22" viewBox="0 0 22 22"><circle cx="11" cy="11" r="11.1" fill="#0b57f7"/><circle cx="11" cy="11" r="5.7" fill="none" stroke="#fff" stroke-width="3.8"/><rect x="11" y="9.4" width="9" height="3.2" fill="#0b57f7"/></svg>
<div class="cell" style="left:468.5px;top:368.80px">Caisse Dépense</div>
<div class="cell" style="left:796.5px;top:368.80px">Espèce</div>
<div class="cell" style="left:975.5px;top:368.80px;letter-spacing:0.22px">Par NIADA Richard le 01/04/2026 13:14</div>
<div class="cell" style="left:1293px;width:175px;text-align:right;top:368.80px;letter-spacing:0.45px">15&#8201;000,00</div>
<div class="del" style="top:363.30px"><svg class="abs" style="left:10px;top:7.5px" width="14" height="13" viewBox="0 0 14 13"><path d="M0.9 0.8L13.1 12.2M13.1 0.8L0.9 12.2" stroke="#ee4a55" stroke-width="1.55"/></svg></div>
<svg class="abs" style="left:11px;top:411.56px" width="8" height="11" viewBox="0 0 8 11"><path d="M1.8 1L6.2 5.5L1.8 10" fill="none" stroke="#1f2328" stroke-width="1.9" stroke-linejoin="round"/></svg>
<div class="cell" style="left:29px;top:409.36px;font-size:13.3px;letter-spacing:0.9px">16/03/2026</div>
<div class="cell" style="left:184.5px;top:409.36px;letter-spacing:0.25px">Vacation</div>
<svg class="abs" style="left:436.7px;top:405.76px" width="22" height="22" viewBox="0 0 22 22"><circle cx="11" cy="11" r="11.1" fill="#0b57f7"/><circle cx="11" cy="11" r="5.7" fill="none" stroke="#fff" stroke-width="3.8"/><rect x="11" y="9.4" width="9" height="3.2" fill="#0b57f7"/></svg>
<div class="cell" style="left:468.5px;top:409.36px">Caisse Dépense</div>
<div class="cell" style="left:796.5px;top:409.36px">Espèce</div>
<div class="cell" style="left:975.5px;top:409.36px;letter-spacing:0.22px">Par NIADA Richard le 16/03/2026 18:16</div>
<div class="cell" style="left:1293px;width:175px;text-align:right;top:409.36px;letter-spacing:0.45px">2&#8201;500,00</div>
<div class="del" style="top:403.86px"><svg class="abs" style="left:10px;top:7.5px" width="14" height="13" viewBox="0 0 14 13"><path d="M0.9 0.8L13.1 12.2M13.1 0.8L0.9 12.2" stroke="#ee4a55" stroke-width="1.55"/></svg></div>
<svg class="abs" style="left:11px;top:452.12px" width="8" height="11" viewBox="0 0 8 11"><path d="M1.8 1L6.2 5.5L1.8 10" fill="none" stroke="#1f2328" stroke-width="1.9" stroke-linejoin="round"/></svg>
<div class="cell" style="left:29px;top:449.92px;font-size:13.3px;letter-spacing:0.9px">16/03/2026</div>
<div class="cell" style="left:184.5px;top:449.92px;letter-spacing:0.25px">Vacation</div>
<svg class="abs" style="left:436.7px;top:446.32px" width="22" height="22" viewBox="0 0 22 22"><circle cx="11" cy="11" r="11.1" fill="#0b57f7"/><circle cx="11" cy="11" r="5.7" fill="none" stroke="#fff" stroke-width="3.8"/><rect x="11" y="9.4" width="9" height="3.2" fill="#0b57f7"/></svg>
<div class="cell" style="left:468.5px;top:449.92px">Caisse Dépense</div>
<div class="cell" style="left:796.5px;top:449.92px">Espèce</div>
<div class="cell" style="left:975.5px;top:449.92px;letter-spacing:0.22px">Par NIADA Richard le 16/03/2026 17:54</div>
<div class="cell" style="left:1293px;width:175px;text-align:right;top:449.92px;letter-spacing:0.45px">2&#8201;500,00</div>
<div class="del" style="top:444.42px"><svg class="abs" style="left:10px;top:7.5px" width="14" height="13" viewBox="0 0 14 13"><path d="M0.9 0.8L13.1 12.2M13.1 0.8L0.9 12.2" stroke="#ee4a55" stroke-width="1.55"/></svg></div>
<svg class="abs" style="left:11px;top:492.68px" width="8" height="11" viewBox="0 0 8 11"><path d="M1.8 1L6.2 5.5L1.8 10" fill="none" stroke="#1f2328" stroke-width="1.9" stroke-linejoin="round"/></svg>
<div class="cell" style="left:29px;top:490.48px;font-size:13.3px;letter-spacing:0.9px">16/03/2026</div>
<div class="cell" style="left:184.5px;top:490.48px;letter-spacing:0.25px">Vacation</div>
<svg class="abs" style="left:436.7px;top:486.88px" width="22" height="22" viewBox="0 0 22 22"><circle cx="11" cy="11" r="11.1" fill="#0b57f7"/><circle cx="11" cy="11" r="5.7" fill="none" stroke="#fff" stroke-width="3.8"/><rect x="11" y="9.4" width="9" height="3.2" fill="#0b57f7"/></svg>
<div class="cell" style="left:468.5px;top:490.48px">Caisse Dépense</div>
<div class="cell" style="left:796.5px;top:490.48px">Espèce</div>
<div class="cell" style="left:975.5px;top:490.48px;letter-spacing:0.22px">Par NIADA Richard le 16/03/2026 17:49</div>
<div class="cell" style="left:1293px;width:175px;text-align:right;top:490.48px;letter-spacing:0.45px">5&#8201;000,00</div>
<div class="del" style="top:484.98px"><svg class="abs" style="left:10px;top:7.5px" width="14" height="13" viewBox="0 0 14 13"><path d="M0.9 0.8L13.1 12.2M13.1 0.8L0.9 12.2" stroke="#ee4a55" stroke-width="1.55"/></svg></div>
<svg class="abs" style="left:11px;top:533.24px" width="8" height="11" viewBox="0 0 8 11"><path d="M1.8 1L6.2 5.5L1.8 10" fill="none" stroke="#1f2328" stroke-width="1.9" stroke-linejoin="round"/></svg>
<div class="cell" style="left:29px;top:531.04px;font-size:13.3px;letter-spacing:0.9px">13/02/2026</div>
<div class="cell" style="left:184.5px;top:531.04px;letter-spacing:0.25px">Vacation</div>
<svg class="abs" style="left:436.7px;top:527.44px" width="22" height="22" viewBox="0 0 22 22"><circle cx="11" cy="11" r="11.1" fill="#0b57f7"/><circle cx="11" cy="11" r="5.7" fill="none" stroke="#fff" stroke-width="3.8"/><rect x="11" y="9.4" width="9" height="3.2" fill="#0b57f7"/></svg>
<div class="cell" style="left:468.5px;top:531.04px">Caisse Dépense</div>
<div class="cell" style="left:796.5px;top:531.04px">Espèce</div>
<div class="cell" style="left:975.5px;top:531.04px;letter-spacing:0.22px">Par le 13/02/2026 14:45</div>
<div class="cell" style="left:1293px;width:175px;text-align:right;top:531.04px;letter-spacing:0.45px">15&#8201;000,00</div>
<div class="del" style="top:525.54px"><svg class="abs" style="left:10px;top:7.5px" width="14" height="13" viewBox="0 0 14 13"><path d="M0.9 0.8L13.1 12.2M13.1 0.8L0.9 12.2" stroke="#ee4a55" stroke-width="1.55"/></svg></div>
<svg class="abs" style="left:11px;top:573.80px" width="8" height="11" viewBox="0 0 8 11"><path d="M1.8 1L6.2 5.5L1.8 10" fill="none" stroke="#1f2328" stroke-width="1.9" stroke-linejoin="round"/></svg>
<div class="cell" style="left:29px;top:571.60px;font-size:13.3px;letter-spacing:0.9px">13/02/2026</div>
<div class="cell" style="left:184.5px;top:571.60px;letter-spacing:0.25px">Vacation</div>
<svg class="abs" style="left:436.7px;top:568.00px" width="22" height="22" viewBox="0 0 22 22"><circle cx="11" cy="11" r="11.1" fill="#0b57f7"/><circle cx="11" cy="11" r="5.7" fill="none" stroke="#fff" stroke-width="3.8"/><rect x="11" y="9.4" width="9" height="3.2" fill="#0b57f7"/></svg>
<div class="cell" style="left:468.5px;top:571.60px">Caisse Dépense</div>
<div class="cell" style="left:796.5px;top:571.60px">Espèce</div>
<div class="cell" style="left:975.5px;top:571.60px;letter-spacing:0.22px">Par le 13/02/2026 14:40</div>
<div class="cell" style="left:1293px;width:175px;text-align:right;top:571.60px;letter-spacing:0.45px">2&#8201;500,00</div>
<div class="del" style="top:566.10px"><svg class="abs" style="left:10px;top:7.5px" width="14" height="13" viewBox="0 0 14 13"><path d="M0.9 0.8L13.1 12.2M13.1 0.8L0.9 12.2" stroke="#ee4a55" stroke-width="1.55"/></svg></div>
<svg class="abs" style="left:11px;top:614.36px" width="8" height="11" viewBox="0 0 8 11"><path d="M1.8 1L6.2 5.5L1.8 10" fill="none" stroke="#1f2328" stroke-width="1.9" stroke-linejoin="round"/></svg>
<div class="cell" style="left:29px;top:612.16px;font-size:13.3px;letter-spacing:0.9px">07/02/2026</div>
<div class="cell" style="left:184.5px;top:612.16px;letter-spacing:0.25px">Vacation</div>
<svg class="abs" style="left:434.5px;top:608.56px" width="26" height="26" viewBox="0 0 26 26"><path d="M13.3 3.2A11.5 10.5 0 0 0 13.3 24.2Z" fill="#15885a"/><path d="M13.3 3.2A11.5 10.5 0 0 0 1.8 13.7L13.3 13.7Z" fill="#060606"/><path d="M2.3 10.8L5.8 13.7L1.9 13.7Z M13.3 10.2L9.6 13.7L13.3 13.7Z" fill="#15885a"/><rect x="1.8" y="13.6" width="11.5" height="1.9" fill="#060606"/><rect x="6.4" y="13.6" width="2.1" height="10.4" fill="#060606"/><rect x="6.8" y="4.2" width="1.4" height="7.8" fill="#9a9a9a"/><path d="M8.6 0.9H13.3V4.9" stroke="#111" stroke-width="0.9" fill="none"/><g font-family="Liberation Sans" font-weight="bold" fill="#1a1a1a"><text x="14.4" y="11.8" font-size="5.2" textLength="8.8" lengthAdjust="spacingAndGlyphs">BANK</text><text x="15.1" y="17.4" font-size="4.4" textLength="3.4" lengthAdjust="spacingAndGlyphs">OF</text><text x="14.8" y="24.3" font-size="5" textLength="10.2" lengthAdjust="spacingAndGlyphs">AFRICA</text></g></svg>
<div class="cell" style="left:468.5px;top:612.16px">BOA</div>
<div class="cell" style="left:796.5px;top:612.16px">TPE</div>
<div class="cell" style="left:975.5px;top:612.16px;letter-spacing:0.22px">Par le 07/02/2026 19:44</div>
<div class="cell" style="left:1293px;width:175px;text-align:right;top:612.16px;letter-spacing:0.45px">5&#8201;000,00</div>
<div class="del" style="top:606.66px"><svg class="abs" style="left:10px;top:7.5px" width="14" height="13" viewBox="0 0 14 13"><path d="M0.9 0.8L13.1 12.2M13.1 0.8L0.9 12.2" stroke="#ee4a55" stroke-width="1.55"/></svg></div>
<svg class="abs" style="left:11px;top:654.92px" width="8" height="11" viewBox="0 0 8 11"><path d="M1.8 1L6.2 5.5L1.8 10" fill="none" stroke="#1f2328" stroke-width="1.9" stroke-linejoin="round"/></svg>
<div class="cell" style="left:29px;top:652.72px;font-size:13.3px;letter-spacing:0.9px">07/02/2026</div>
<div class="cell" style="left:184.5px;top:652.72px;letter-spacing:0.25px">Vacation</div>
<svg class="abs" style="left:434.5px;top:649.12px" width="26" height="26" viewBox="0 0 26 26"><path d="M13.3 3.2A11.5 10.5 0 0 0 13.3 24.2Z" fill="#15885a"/><path d="M13.3 3.2A11.5 10.5 0 0 0 1.8 13.7L13.3 13.7Z" fill="#060606"/><path d="M2.3 10.8L5.8 13.7L1.9 13.7Z M13.3 10.2L9.6 13.7L13.3 13.7Z" fill="#15885a"/><rect x="1.8" y="13.6" width="11.5" height="1.9" fill="#060606"/><rect x="6.4" y="13.6" width="2.1" height="10.4" fill="#060606"/><rect x="6.8" y="4.2" width="1.4" height="7.8" fill="#9a9a9a"/><path d="M8.6 0.9H13.3V4.9" stroke="#111" stroke-width="0.9" fill="none"/><g font-family="Liberation Sans" font-weight="bold" fill="#1a1a1a"><text x="14.4" y="11.8" font-size="5.2" textLength="8.8" lengthAdjust="spacingAndGlyphs">BANK</text><text x="15.1" y="17.4" font-size="4.4" textLength="3.4" lengthAdjust="spacingAndGlyphs">OF</text><text x="14.8" y="24.3" font-size="5" textLength="10.2" lengthAdjust="spacingAndGlyphs">AFRICA</text></g></svg>
<div class="cell" style="left:468.5px;top:652.72px">BOA</div>
<div class="cell" style="left:796.5px;top:652.72px">TPE</div>
<div class="cell" style="left:975.5px;top:652.72px;letter-spacing:0.22px">Par le 07/02/2026 19:39</div>
<div class="cell" style="left:1293px;width:175px;text-align:right;top:652.72px;letter-spacing:0.45px">10&#8201;000,00</div>
<div class="del" style="top:647.22px"><svg class="abs" style="left:10px;top:7.5px" width="14" height="13" viewBox="0 0 14 13"><path d="M0.9 0.8L13.1 12.2M13.1 0.8L0.9 12.2" stroke="#ee4a55" stroke-width="1.55"/></svg></div>
<svg class="abs" style="left:11px;top:695.48px" width="8" height="11" viewBox="0 0 8 11"><path d="M1.8 1L6.2 5.5L1.8 10" fill="none" stroke="#1f2328" stroke-width="1.9" stroke-linejoin="round"/></svg>
<div class="cell" style="left:29px;top:693.28px;font-size:13.3px;letter-spacing:0.9px">07/02/2026</div>
<div class="cell" style="left:184.5px;top:693.28px;letter-spacing:0.25px">Vacation</div>
<svg class="abs" style="left:434.5px;top:689.68px" width="26" height="26" viewBox="0 0 26 26"><path d="M13.3 3.2A11.5 10.5 0 0 0 13.3 24.2Z" fill="#15885a"/><path d="M13.3 3.2A11.5 10.5 0 0 0 1.8 13.7L13.3 13.7Z" fill="#060606"/><path d="M2.3 10.8L5.8 13.7L1.9 13.7Z M13.3 10.2L9.6 13.7L13.3 13.7Z" fill="#15885a"/><rect x="1.8" y="13.6" width="11.5" height="1.9" fill="#060606"/><rect x="6.4" y="13.6" width="2.1" height="10.4" fill="#060606"/><rect x="6.8" y="4.2" width="1.4" height="7.8" fill="#9a9a9a"/><path d="M8.6 0.9H13.3V4.9" stroke="#111" stroke-width="0.9" fill="none"/><g font-family="Liberation Sans" font-weight="bold" fill="#1a1a1a"><text x="14.4" y="11.8" font-size="5.2" textLength="8.8" lengthAdjust="spacingAndGlyphs">BANK</text><text x="15.1" y="17.4" font-size="4.4" textLength="3.4" lengthAdjust="spacingAndGlyphs">OF</text><text x="14.8" y="24.3" font-size="5" textLength="10.2" lengthAdjust="spacingAndGlyphs">AFRICA</text></g></svg>
<div class="cell" style="left:468.5px;top:693.28px">BOA</div>
<div class="cell" style="left:796.5px;top:693.28px">TPE</div>
<div class="cell" style="left:975.5px;top:693.28px;letter-spacing:0.22px">Par le 07/02/2026 10:15</div>
<div class="cell" style="left:1293px;width:175px;text-align:right;top:693.28px;letter-spacing:0.45px">17&#8201;500,00</div>
<div class="del" style="top:687.78px"><svg class="abs" style="left:10px;top:7.5px" width="14" height="13" viewBox="0 0 14 13"><path d="M0.9 0.8L13.1 12.2M13.1 0.8L0.9 12.2" stroke="#ee4a55" stroke-width="1.55"/></svg></div>
<svg class="abs" style="left:11px;top:736.04px" width="8" height="11" viewBox="0 0 8 11"><path d="M1.8 1L6.2 5.5L1.8 10" fill="none" stroke="#1f2328" stroke-width="1.9" stroke-linejoin="round"/></svg>
<div class="cell" style="left:29px;top:733.84px;font-size:13.3px;letter-spacing:0.9px">07/02/2026</div>
<div class="cell" style="left:184.5px;top:733.84px;letter-spacing:0.25px">Vacation</div>
<svg class="abs" style="left:434.5px;top:730.24px" width="26" height="26" viewBox="0 0 26 26"><path d="M13.3 3.2A11.5 10.5 0 0 0 13.3 24.2Z" fill="#15885a"/><path d="M13.3 3.2A11.5 10.5 0 0 0 1.8 13.7L13.3 13.7Z" fill="#060606"/><path d="M2.3 10.8L5.8 13.7L1.9 13.7Z M13.3 10.2L9.6 13.7L13.3 13.7Z" fill="#15885a"/><rect x="1.8" y="13.6" width="11.5" height="1.9" fill="#060606"/><rect x="6.4" y="13.6" width="2.1" height="10.4" fill="#060606"/><rect x="6.8" y="4.2" width="1.4" height="7.8" fill="#9a9a9a"/><path d="M8.6 0.9H13.3V4.9" stroke="#111" stroke-width="0.9" fill="none"/><g font-family="Liberation Sans" font-weight="bold" fill="#1a1a1a"><text x="14.4" y="11.8" font-size="5.2" textLength="8.8" lengthAdjust="spacingAndGlyphs">BANK</text><text x="15.1" y="17.4" font-size="4.4" textLength="3.4" lengthAdjust="spacingAndGlyphs">OF</text><text x="14.8" y="24.3" font-size="5" textLength="10.2" lengthAdjust="spacingAndGlyphs">AFRICA</text></g></svg>
<div class="cell" style="left:468.5px;top:733.84px">BOA</div>
<div class="cell" style="left:796.5px;top:733.84px">TPE</div>
<div class="cell" style="left:975.5px;top:733.84px;letter-spacing:0.22px">Par le 07/02/2026 10:10</div>
<div class="cell" style="left:1293px;width:175px;text-align:right;top:733.84px;letter-spacing:0.45px">17&#8201;500,00</div>
<div class="del" style="top:728.34px"><svg class="abs" style="left:10px;top:7.5px" width="14" height="13" viewBox="0 0 14 13"><path d="M0.9 0.8L13.1 12.2M13.1 0.8L0.9 12.2" stroke="#ee4a55" stroke-width="1.55"/></svg></div>
</div>
<div class="abs" style="left:1893px;top:153.5px;width:14px;height:730.5px;background:#f9f9f9"></div>
<svg class="abs" style="left:1895px;top:158px" width="10" height="8" viewBox="0 0 10 8"><path d="M0.5 7.5L5 1L9.5 7.5Z" fill="#8a8a8a"/></svg>
<div class="abs" style="left:1896px;top:172px;width:9px;height:665px;background:#8a8a8a;border-radius:4.5px"></div>
<svg class="abs" style="left:1895px;top:872px" width="10" height="8" viewBox="0 0 10 8"><path d="M0.5 0.5L5 7L9.5 0.5Z" fill="#8a8a8a"/></svg>
<div class="abs" style="left:1029px;top:895px;width:32px;height:32px;background:#eef5ff"></div>
<div class="abs" style="left:1042px;top:903px;font-size:12.5px;line-height:15px;color:#2c3440">1</div>
<svg class="abs" style="left:948px;top:904px" width="16" height="12" viewBox="0 0 16 12"><path d="M7 1.5L2.5 6L7 10.5M13 1.5L8.5 6L13 10.5" fill="none" stroke="#b3b8c0" stroke-width="1.4"/></svg>
<svg class="abs" style="left:997px;top:904px" width="10" height="12" viewBox="0 0 10 12"><path d="M7 1.5L2.5 6L7 10.5" fill="none" stroke="#b3b8c0" stroke-width="1.4"/></svg>
<svg class="abs" style="left:1083px;top:904px" width="10" height="12" viewBox="0 0 10 12"><path d="M3 1.5L7.5 6L3 10.5" fill="none" stroke="#b3b8c0" stroke-width="1.4"/></svg>
<svg class="abs" style="left:1127px;top:904px" width="16" height="12" viewBox="0 0 16 12"><path d="M3 1.5L7.5 6L3 10.5M9 1.5L13.5 6L9 10.5" fill="none" stroke="#b3b8c0" stroke-width="1.4"/></svg>
<div class="abs" style="left:1177px;top:901px;font-size:17px;line-height:19px;color:#1f2328">20</div>
<svg class="abs" style="left:1207px;top:905px" width="16" height="10" viewBox="0 0 16 10"><path d="M1.5 1.5L8 8L14.5 1.5" fill="none" stroke="#333" stroke-width="1.8"/></svg>
</body></html>
